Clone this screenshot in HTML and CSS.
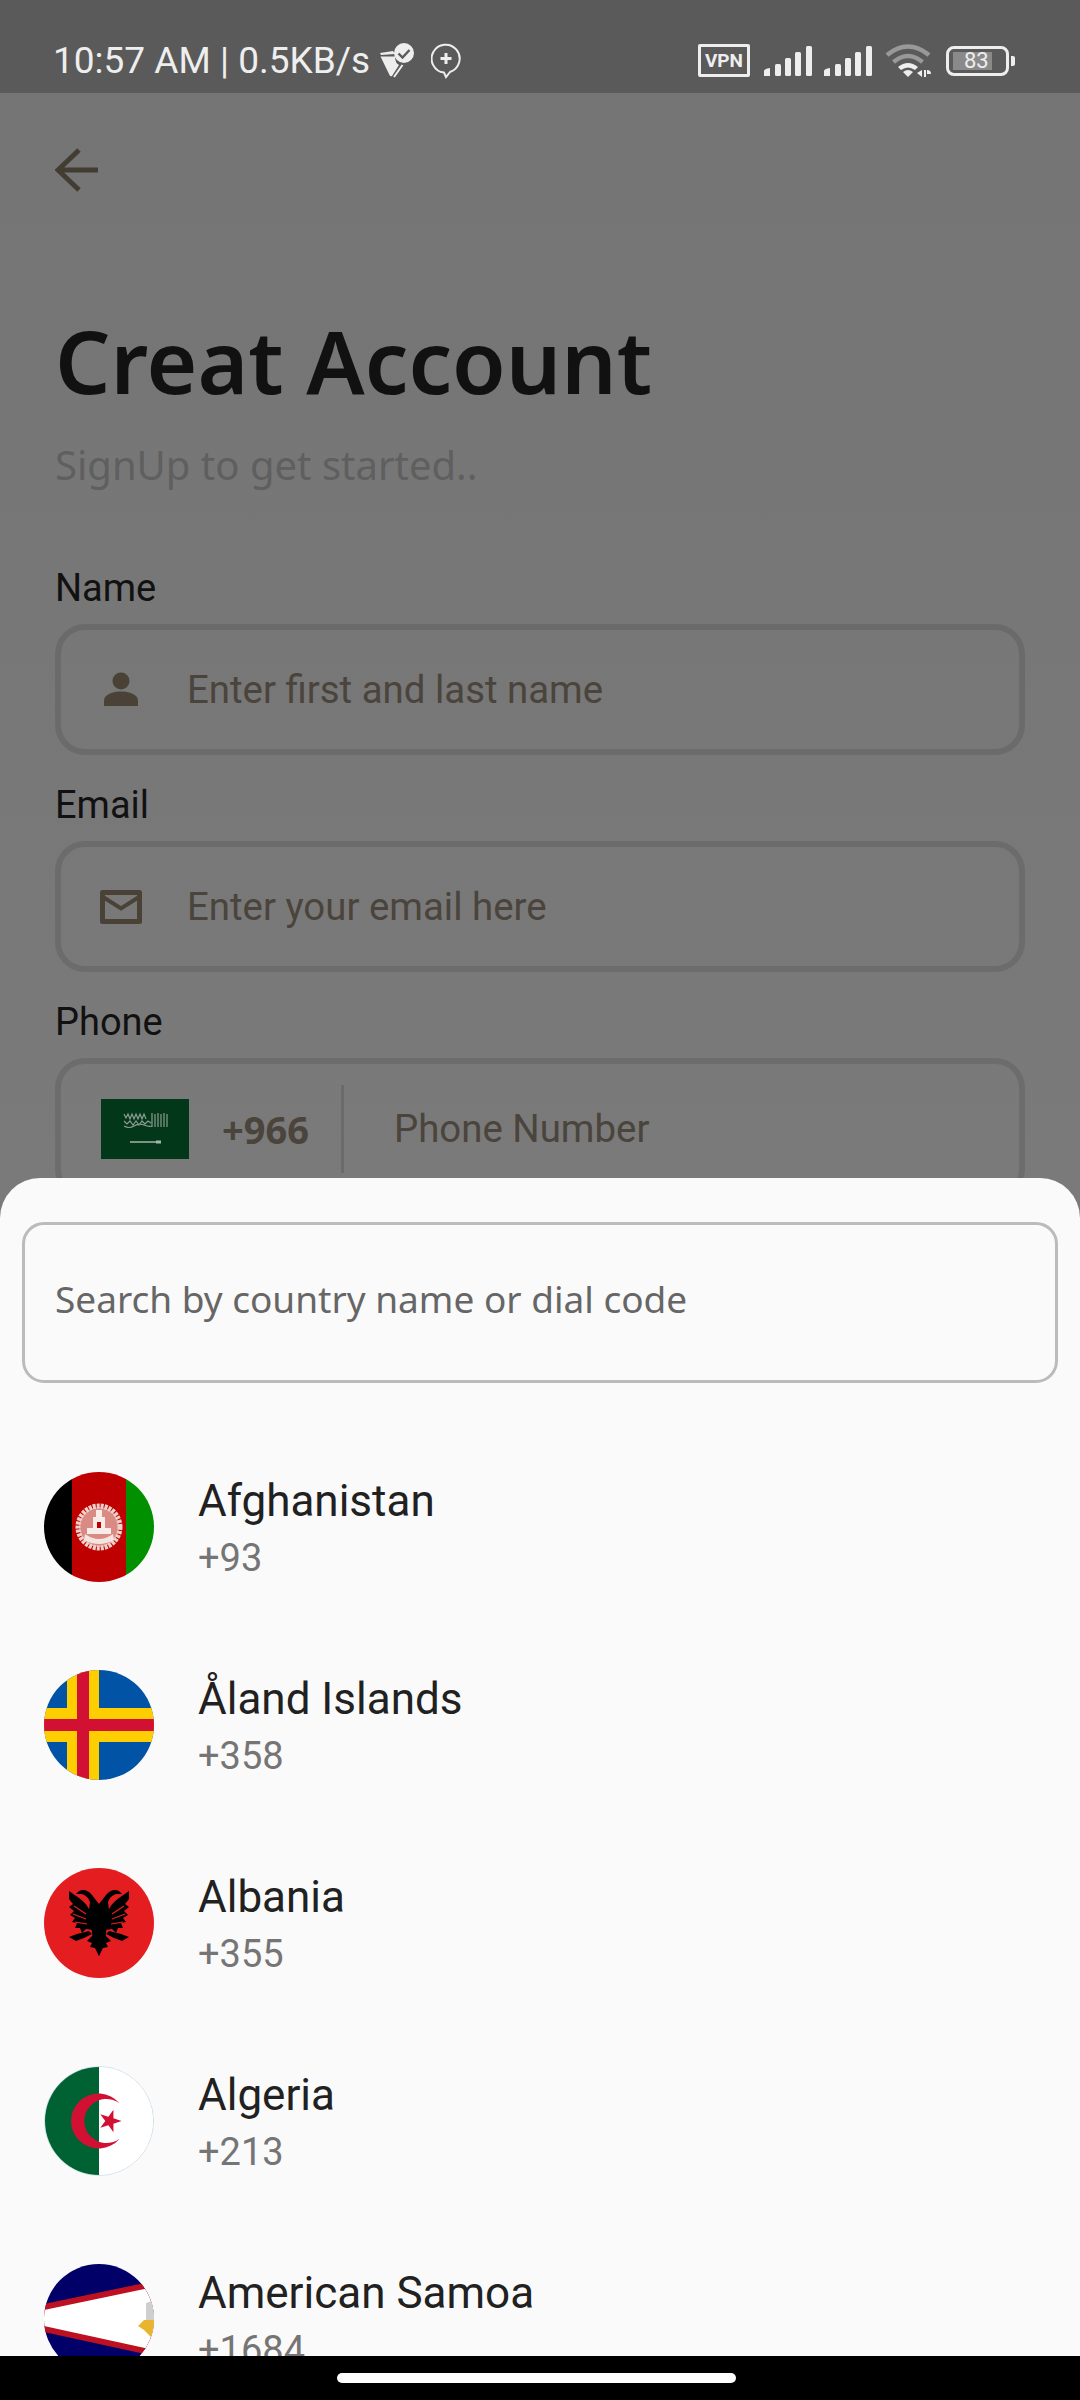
FILE: index.html
```html
<!DOCTYPE html>
<html lang="en">
<head>
  <meta charset="UTF-8" />
  <meta name="viewport" content="width=device-width, initial-scale=1.0"/>
  <title>Creat Account</title>
  <link rel="stylesheet" href="styles.css">
</head>
<body>
  <div class="screen">
    <div class="status-bar">
      <div class="status-left">
        <span class="status-time">10:57 AM | 0.5KB/s</span>
        <svg class="icon-cleaner" viewBox="0 0 36 36" width="36" height="36">
          <path d="M1 10 L14 8 L16 11 L2 12 Z" fill="#eee"/>
          <path d="M1.5 13.5 L16 13.5 Q16 20 20 22 L13 33 Q11.5 34 10.5 32 Z" fill="#eee"/>
          <path d="M15 34 L23.5 22" stroke="#eee" stroke-width="2" fill="none"/>
          <circle cx="25" cy="10" r="10" fill="#eee"/>
          <path d="M19.5 10.5 L23.5 14.5 L30.5 7" stroke="#5a5a5a" stroke-width="2.4" fill="none"/>
        </svg>
        <svg class="icon-bubble" viewBox="0 0 30 36" width="30" height="36">
          <path d="M13 29.6 A14 14 0 1 1 19 29 L15 34 Z" fill="none" stroke="#eee" stroke-width="2"/>
          <path d="M15 10 V21 M9.5 15.5 H20.5" stroke="#eee" stroke-width="3"/>
        </svg>
      </div>
      <div class="status-right">
        <span class="vpn-badge">VPN</span>
        <svg class="icon-signal" viewBox="0 0 48 30" width="48" height="30">
          <g fill="#eee">
            <path d="M0 30 V25 Q0 23 6 22 V30 Z"/>
            <rect x="11" y="18" width="6" height="12" rx="1.5"/>
            <rect x="21" y="12" width="6" height="18" rx="1.5"/>
            <rect x="31" y="6" width="6" height="24" rx="1.5"/>
            <rect x="42" y="0" width="6" height="30" rx="1.5"/>
          </g>
        </svg>
        <svg class="icon-signal" viewBox="0 0 48 30" width="48" height="30">
          <g fill="#eee">
            <path d="M0 30 V25 Q0 23 6 22 V30 Z"/>
            <rect x="11" y="18" width="6" height="12" rx="1.5"/>
            <rect x="21" y="12" width="6" height="18" rx="1.5"/>
            <rect x="31" y="6" width="6" height="24" rx="1.5"/>
            <rect x="42" y="0" width="6" height="30" rx="1.5"/>
          </g>
        </svg>
        <svg class="icon-wifi" viewBox="0 0 46 34" width="46" height="34">
          <path d="M2 11 Q23 -6 44 11" fill="none" stroke="#999" stroke-width="4.5"/>
          <path d="M8.5 18 Q23 6 37.5 18" fill="none" stroke="#999" stroke-width="4.5"/>
          <path d="M13 23 Q23 15 33 23 L30 26 Q23 21 16 26 Z" fill="#eee"/>
          <path d="M18 28 Q23 24 28 28 L23 33 Z" fill="#eee"/>
          <path d="M37 26 V33 L32 29 Z M39 26 V33 H41 V26 Z M42 26 Q46 26 46 30 H42 Z" fill="#eee"/>
        </svg>
        <div class="battery">
          <div class="battery-body">
            <div class="battery-fill"></div>
            <span class="battery-text">83</span>
          </div>
          <div class="battery-tip"></div>
        </div>
      </div>
    </div>

    <div class="page">
      <svg class="back-arrow" viewBox="0 0 44 44" width="44" height="44">
        <path d="M43 22 H3 M24 2 L3 22 L24 42" fill="none" stroke="#423c32" stroke-width="5"/>
      </svg>
      <h1 class="page-title">Creat Account</h1>
      <p class="page-sub">SignUp to get started..</p>

      <div class="field-label">Name</div>
      <div class="field">
        <svg class="field-icon" viewBox="0 0 42 36" width="42" height="36">
          <circle cx="21" cy="9" r="8.5" fill="#4a4236"/>
          <path d="M4 34 V29 C4 22 13 19.5 21 19.5 C29 19.5 38 22 38 29 V34 Z" fill="#4a4236"/>
        </svg>
        <span class="field-hint">Enter first and last name</span>
      </div>

      <div class="field-label">Email</div>
      <div class="field">
        <svg class="field-icon" viewBox="0 0 42 34" width="42" height="34">
          <path d="M2.5 2.5 H39.5 V31.5 H2.5 Z" fill="none" stroke="#4a4236" stroke-width="5" stroke-linejoin="round"/>
          <path d="M3 7 L21 18.5 L39 7" fill="none" stroke="#4a4236" stroke-width="4"/>
        </svg>
        <span class="field-hint">Enter your email here</span>
      </div>

      <div class="field-label">Phone</div>
      <div class="field field-phone">
        <svg class="phone-flag" viewBox="0 0 88 60" width="88" height="60">
          <rect width="88" height="60" fill="#03371a"/>
          <path d="M23 15 l2 4 l2 -4 l2 5 l2 -5 l2 5 l2 -5 l2 5 l2 -5 l2 5 l2 -5 l2 5 M23 22 l3 3 l3 -3 l3 4 l3 -4 l3 4 l3 -4 l3 3 l3 -3 l3 2 M23 27 q5 3 10 0 t10 -1 t8 1 M51 14 V28 M54 15 V28 M57 14 V28 M60 15 V28 M63 14 V28 M66 15 V28"
                fill="none" stroke="#8b9c8f" stroke-width="1.2"/>
          <path d="M29 43 H60" stroke="#a5b3a8" stroke-width="1.5"/>
          <path d="M55 41.5 H60 V44.5 H55 Z" fill="#a5b3a8"/>
        </svg>
        <span class="phone-code">+966</span>
        <div class="phone-divider"></div>
        <span class="field-hint">Phone Number</span>
      </div>
    </div>

    <div class="sheet">
      <div class="search-box">Search by country name or dial code</div>
      <div class="country-list">
        <div class="country-row">
          <svg class="country-flag" viewBox="0 0 110 110">
            <rect width="28" height="110" fill="#000"/>
            <rect x="28" width="54" height="110" fill="#bf0000"/>
            <rect x="82" width="28" height="110" fill="#009000"/>
            <circle cx="55" cy="55" r="20" fill="#d98a82"/>
            <circle cx="55" cy="55" r="21" fill="none" stroke="#f0d0cb" stroke-width="5" stroke-dasharray="3 1"/>
            <path d="M41 62 Q55 72 69 62 L70 68 Q55 76 40 68 Z" fill="#f4e4e0"/>
            <path d="M43 56 H67 V62 H43 Z M49 45 H61 V56 H49 Z M52 38 H58 V45 H52 Z" fill="#f6ecea"/>
            <path d="M53 50 H57 V56 H53 Z" fill="#bf0000"/>
          </svg>
          <div class="country-text">
            <div class="country-name">Afghanistan</div>
            <div class="country-code">+93</div>
          </div>
        </div>
        <div class="country-row">
          <svg class="country-flag" viewBox="0 0 110 110">
            <rect width="110" height="110" fill="#0053a5"/>
            <rect x="23" width="32" height="110" fill="#ffce00"/>
            <rect y="38" width="110" height="34" fill="#ffce00"/>
            <rect x="33" width="12" height="110" fill="#d21034"/>
            <rect y="49" width="110" height="12" fill="#d21034"/>
          </svg>
          <div class="country-text">
            <div class="country-name">Åland Islands</div>
            <div class="country-code">+358</div>
          </div>
        </div>
        <div class="country-row">
          <svg class="country-flag" viewBox="0 0 110 110">
            <rect width="110" height="110" fill="#e41e20"/>
            <g fill="#000">
              <path d="M48 27 Q42 20 35 23 L32 26 L38 26 Q44 28 46 34 L45 42 L49 72 L55 88 L61 72 L65 42 L64 34 Q66 28 72 26 L78 26 L75 23 Q68 20 62 27 L55 36 Z"/>
              <path d="M25 23 L35 30 Q44 36 47 46 L49 62 L42 61 L38 65 L36 60 L31 60 L33 55 L28 54 L31 50 L26 47 L30 43 L25 39 L29 36 L25 31 Z"/>
              <path d="M85 23 L75 30 Q66 36 63 46 L61 62 L68 61 L72 65 L74 60 L79 60 L77 55 L82 54 L79 50 L84 47 L80 43 L85 39 L81 36 L85 31 Z"/>
              <path d="M25 69 L33 66 L45 63 L48 66 L40 70 L32 73 Z"/>
              <path d="M85 69 L77 66 L65 63 L62 66 L70 70 L78 73 Z"/>
              <path d="M43 73 L50 66 H60 L67 73 L62 75 L64 79 L59 80 L55 88 L51 80 L46 79 L48 75 Z"/>
            </g>
            <path d="M30 38 L42 46 M29 46 L42 51 M31 54 L43 56 M80 38 L68 46 M81 46 L68 51 M79 54 L67 56" stroke="#e41e20" stroke-width="1.2" fill="none"/>
          </svg>
          <div class="country-text">
            <div class="country-name">Albania</div>
            <div class="country-code">+355</div>
          </div>
        </div>
        <div class="country-row">
          <svg class="country-flag country-flag-outlined" viewBox="0 0 110 110">
            <rect width="55" height="110" fill="#006233"/>
            <rect x="55" width="55" height="110" fill="#fff"/>
            <path d="M76 37 A28 28 0 1 0 76 73 A22.5 22.5 0 1 1 76 37 Z" fill="#d21034"/>
            <polygon points="78,55 69.7,52.3 69.7,43.6 64.6,50.6 56.3,48 61.4,55 56.3,62 64.6,59.4 69.7,66.4 69.7,57.7" fill="#d21034"/>
          </svg>
          <div class="country-text">
            <div class="country-name">Algeria</div>
            <div class="country-code">+213</div>
          </div>
        </div>
        <div class="country-row">
          <svg class="country-flag" viewBox="0 0 110 110">
            <rect width="110" height="110" fill="#000068"/>
            <polygon points="0,40 110,17 110,92 0,68" fill="#bd1021"/>
            <polygon points="0,46 110,23 110,86 0,62" fill="#fff"/>
            <path d="M102 39 L110 36 V58 L102 56 Z" fill="#cfcfcf"/>
            <path d="M100 56 L110 56 V78 L106 72 L100 66 L94 62 Z" fill="#e9b52e"/>
          </svg>
          <div class="country-text">
            <div class="country-name">American Samoa</div>
            <div class="country-code">+1684</div>
          </div>
        </div>
      </div>
    </div>

    <div class="nav-bar"><div class="nav-pill"></div></div>
  </div>
</body>
</html>
```

FILE: styles.css
```css
* {
  box-sizing: border-box;
}
body {
  margin: 0;
  font-family: Roboto, sans-serif;
  background: #757575;
}
.screen {
  position: relative;
  width: 1080px;
  height: 2400px;
  overflow: hidden;
  background: linear-gradient(#747474 0, #7a7a7a 1180px);
}
.status-bar {
  display: flex;
  justify-content: space-between;
  align-items: center;
  height: 93px;
  padding: 28px 65px 0 53px;
  background: #5a5a5a;
  color: #eeeeee;
}
.status-left {
  display: flex;
  align-items: center;
}
.status-time {
  font-size: 37px;
  line-height: 36px;
}
.icon-cleaner {
  margin-left: 9px;
}
.icon-bubble {
  margin-left: 16px;
}
.status-right {
  display: flex;
  align-items: center;
  gap: 12px;
}
.vpn-badge {
  display: flex;
  align-items: center;
  justify-content: center;
  width: 52px;
  height: 33px;
  margin-right: 2px;
  border: 3px solid #eeeeee;
  border-radius: 2px;
  font-size: 19px;
  font-weight: 700;
}
.icon-wifi {
  margin-left: 1px;
}
.battery {
  display: flex;
  align-items: center;
  gap: 2px;
  margin-left: 3px;
}
.battery-body {
  position: relative;
  display: flex;
  align-items: center;
  justify-content: center;
  width: 63px;
  height: 30px;
  border: 3px solid #eeeeee;
  border-radius: 8px;
  padding: 0 4px;
}
.battery-fill {
  width: 100%;
  height: 18px;
  margin-right: 10px;
  background: #8a8a8a;
}
.battery-text {
  position: absolute;
  left: 15px;
  top: 0;
  font-size: 22px;
  line-height: 24px;
}
.battery-tip {
  width: 4px;
  height: 10px;
  background: #eeeeee;
  border-radius: 0 2px 2px 0;
}
.page {
  padding: 55px 55px 0;
}
.back-arrow {
  display: block;
}
.page-title {
  margin: 113px 0 0;
  font-family: "Noto Sans", sans-serif;
  font-size: 87px;
  line-height: 110px;
  font-weight: 600;
  color: #111111;
}
.page-sub {
  margin: 25px 0 0;
  font-family: "Noto Sans", sans-serif;
  font-size: 40px;
  line-height: 50px;
  color: #5f5f5f;
}
.field-label {
  margin-top: 22px;
  font-size: 38px;
  line-height: 56px;
  color: #111111;
}
.page-sub + .field-label {
  margin-top: 70px;
}
.field {
  display: flex;
  align-items: center;
  height: 131px;
  margin-top: 8px;
  padding-left: 39px;
  border: 6px solid rgba(0, 0, 0, 0.1);
  border-radius: 30px;
}
.field-icon {
  width: 42px;
  flex-shrink: 0;
}
.field-hint {
  margin-left: 45px;
  font-size: 38.4px;
  color: #4a443c;
}
.field-phone {
  height: 141px;
  padding-left: 40px;
}
.phone-flag {
  flex-shrink: 0;
}
.phone-code {
  margin-left: 33px;
  font-family: "Noto Sans", sans-serif;
  font-size: 38px;
  font-weight: 700;
  color: #4a443c;
}
.phone-divider {
  width: 3px;
  height: 88px;
  margin-left: 32px;
  background: rgba(0, 0, 0, 0.12);
}
.field-phone .field-hint {
  margin-left: 50px;
}
.sheet {
  position: absolute;
  top: 1178px;
  left: 0;
  right: 0;
  bottom: 44px;
  overflow: hidden;
  background: #fafafa;
  border-radius: 40px 40px 0 0;
  padding: 44px 22px 0;
}
.search-box {
  display: flex;
  align-items: center;
  height: 161px;
  padding: 0 30px 8px;
  border: 3px solid #bbbbbb;
  border-radius: 22px;
  font-family: "Noto Sans", sans-serif;
  font-size: 37px;
  color: #666666;
}
.country-list {
  display: flex;
  flex-direction: column;
  padding: 89px 22px 0;
  gap: 88px;
}
.country-row {
  display: flex;
  align-items: center;
  gap: 44px;
  height: 110px;
}
.country-flag {
  width: 110px;
  height: 110px;
  border-radius: 50%;
  flex-shrink: 0;
}
.country-flag-outlined {
  border: 1px solid #cfe0ea;
}
.country-text {
  padding-top: 6px;
}
.country-name {
  font-size: 44px;
  line-height: 56px;
  color: #212121;
}
.country-code {
  font-size: 38px;
  line-height: 58px;
  color: #757575;
}
.nav-bar {
  position: absolute;
  left: 0;
  right: 0;
  bottom: 0;
  height: 44px;
  background: #000000;
  padding: 17px 0 0 337px;
}
.nav-pill {
  width: 399px;
  height: 10px;
  border-radius: 5px;
  background: #ffffff;
}
```
